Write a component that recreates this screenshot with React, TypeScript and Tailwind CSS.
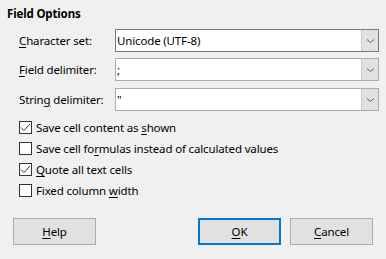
import React from "react";

const U = ({ children }: { children: React.ReactNode }) => (
  <span className="underline underline-offset-[2px] decoration-[1px]">{children}</span>
);

function Combo({ value, dark }: { value: string; dark?: boolean }) {
  return (
    <div
      className={`flex h-[23px] w-[264px] border bg-white ${dark ? "border-[#7a7a7a]" : "border-[#adadad]"}`}
    >
      <div className="flex-1 pl-[1px] leading-[21px] text-black">{value}</div>
      <div className="flex w-[17px] items-center justify-center bg-[#e1e1e1] border-l border-[#cccccc]">
        <svg width="9" height="6" viewBox="0 0 9 6">
          <path d="M1 1.5 L4.5 4.5 L8 1.5" fill="none" stroke="#606060" strokeWidth="1" />
        </svg>
      </div>
    </div>
  );
}

function Check({ checked, children }: { checked?: boolean; children: React.ReactNode }) {
  return (
    <div className="flex h-[13px] items-center gap-[4px]">
      <div className="flex h-[13px] w-[13px] items-center justify-center border border-[#333333] bg-white">
        {checked && (
          <svg width="11" height="11" viewBox="0 0 11 11">
            <path d="M1 5.5 L4 8.5 L10 2" fill="none" stroke="#333333" strokeWidth="1" />
          </svg>
        )}
      </div>
      <span className="leading-[13px]">{children}</span>
    </div>
  );
}

function Btn({ children, primary, className = "" }: { children: React.ReactNode; primary?: boolean; className?: string }) {
  return (
    <div
      className={`flex h-[27px] w-[83px] items-center justify-center bg-[#e1e1e1] ${
        primary ? "border-2 border-[#0078d7]" : "border border-[#adadad]"
      } ${className}`}
    >
      {children}
    </div>
  );
}

export default function App() {
  return (
    <div
      className="relative h-[259px] w-[386px] overflow-hidden bg-[#f0f0f0] text-[11.5px] tracking-[-0.15px] text-black"
      style={{ fontFamily: '"Noto Sans", sans-serif' }}
    >
      <div className="pl-[7px] pt-[6px] font-bold leading-[16px]">Field Options</div>
      <div className="ml-[19px] mt-[7px] flex flex-col">
        <div className="flex items-center">
          <div className="w-[96px]"><U>C</U>haracter set:</div>
          <Combo value="Unicode (UTF-8)" dark />
        </div>
        <div className="mt-[6px] flex items-center">
          <div className="w-[96px]"><U>F</U>ield delimiter:</div>
          <Combo value=";" />
        </div>
        <div className="mt-[7px] flex items-center">
          <div className="w-[96px]">Strin<U>g</U> delimiter:</div>
          <Combo value={'"'} />
        </div>
        <div className="mt-[10px] flex flex-col gap-[8px]">
          <Check checked>Save cell content as <U>s</U>hown</Check>
          <Check>Save cell fo<U>r</U>mulas instead of calculated values</Check>
          <Check checked><U>Q</U>uote all text cells</Check>
          <Check>Fixed column <U>w</U>idth</Check>
        </div>
      </div>
      <div className="mt-[21px] flex px-[13px]">
        <Btn><U>H</U>elp</Btn>
        <Btn primary className="ml-auto w-[82px]"><U>O</U>K</Btn>
        <Btn className="ml-[9px]"><U>C</U>ancel</Btn>
      </div>
    </div>
  );
}
